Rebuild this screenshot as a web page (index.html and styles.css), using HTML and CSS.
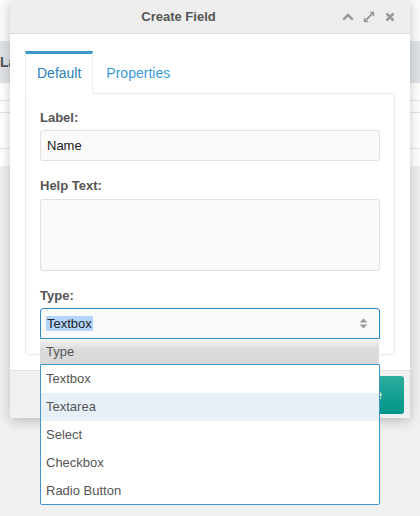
FILE: index.html
```html
<!DOCTYPE html>
<html>
<head>
<meta charset="utf-8">
<link rel="stylesheet" href="styles.css">
</head>
<body>
<div class="page">
  <div class="page-top"></div>
  <div class="table-head"><span class="th">Label</span></div>
  <div class="row r1"></div>
  <div class="row r2"></div>
  <div class="row r3"></div>
</div>

<div class="modal">
  <div class="modal-header">
    <div class="modal-title">Create Field</div>
    <div class="modal-icons">
      <svg class="ic" width="12" height="8" viewBox="0 0 12 8"><path d="M1.3 6.7 L6 2 L10.7 6.7" stroke="#9a9a9a" stroke-width="2.6" fill="none"/></svg>
      <svg class="ic" width="12" height="12" viewBox="0 0 12 12"><path d="M3 9 L9 3" stroke="#9a9a9a" stroke-width="1.8"/><path d="M6.2 0.8 L11.2 0.8 L11.2 5.8 Z" fill="#9a9a9a"/><path d="M0.8 6.2 L0.8 11.2 L5.8 11.2 Z" fill="#9a9a9a"/></svg>
      <svg class="ic" width="10" height="10" viewBox="0 0 10 10"><path d="M1.5 1.5 L8.5 8.5 M8.5 1.5 L1.5 8.5" stroke="#9a9a9a" stroke-width="2.6"/></svg>
    </div>
  </div>
  <div class="modal-body">
    <div class="tabs">
      <div class="tab active">Default</div>
      <div class="tab">Properties</div>
    </div>
    <div class="panel">
      <div class="field">
        <div class="label">Label:</div>
        <div class="input">Name</div>
      </div>
      <div class="field">
        <div class="label">Help Text:</div>
        <div class="input textarea"></div>
      </div>
      <div class="field last">
        <div class="label">Type:</div>
        <div class="select-wrap">
          <div class="select"><span class="sel-text">Textbox</span>
            <svg class="updown" width="9" height="11" viewBox="0 0 9 11"><path d="M0.5 4.5 L4.5 0.5 L8.5 4.5 Z M0.5 6.5 L4.5 10.5 L8.5 6.5 Z" fill="#999"/></svg>
          </div>
          <div class="dropdown">
            <div class="dd-head">Type</div>
            <div class="dd-list">
              <div class="dd-item">Textbox</div>
              <div class="dd-item hover">Textarea</div>
              <div class="dd-item">Select</div>
              <div class="dd-item">Checkbox</div>
              <div class="dd-item">Radio Button</div>
            </div>
          </div>
        </div>
      </div>
    </div>
  </div>
  <div class="modal-footer">
    <div class="btn">Save</div>
  </div>
</div>
</body>
</html>
```

FILE: styles.css
```css
html, body {
  margin: 0;
  padding: 0;
}
body {
  width: 420px;
  height: 516px;
  background: #f0f0f0;
  font-family: "Liberation Sans", Arial, sans-serif;
  font-size: 13px;
  color: #555;
  position: relative;
  overflow: hidden;
}
.page {
  background: #fff;
}
.page-top {
  height: 41px;
  background: #fbfbfb;
}
.table-head {
  height: 42px;
  background: #dfe3e7;
  display: flex;
  align-items: center;
}
.th {
  font-weight: bold;
  color: #555;
  font-size: 14px;
  padding-left: 0;
}
.row {
  border-bottom: 1px solid #e4e4e4;
}
.r1 { height: 17px; }
.r2 { height: 11px; }
.r3 { height: 35px; }
.page::after {
  content: "";
  display: block;
  height: 17px;
}

.modal {
  position: absolute;
  left: 10px;
  top: 0;
  width: 400px;
  background: #fff;
  box-shadow: 0 3px 12px rgba(0,0,0,0.22);
  border-radius: 0 0 3px 3px;
}
.modal-header {
  height: 34px;
  background: #eeeeee;
  border-bottom: 1px solid #dcdcdc;
  box-sizing: border-box;
  display: flex;
  align-items: center;
}
.modal-title {
  flex: 1;
  text-align: center;
  font-weight: bold;
  font-size: 13px;
  color: #555;
  padding-left: 5px;
}
.modal-icons {
  display: flex;
  align-items: center;
  padding-right: 15px;
  gap: 9px;
}
.ic { display: block; }
.ic:last-child { margin-left: 1px; }

.modal-body {
  padding: 17px 15px 15px;
}
.tabs {
  display: flex;
  height: 42px;
}
.tab {
  box-sizing: border-box;
  height: 42px;
  padding: 3px 13px 0 13px;
  line-height: 39px;
  font-size: 14px;
  color: #3b9ad8;
}
.tab.active {
  padding: 0 11px 0 11px;
  border-top: 3px solid #3797d3;
  border-left: 1px solid #eee;
  border-right: 1px solid #eee;
  background: #fff;
  color: #2a7fb8;
  position: relative;
  z-index: 1;
  margin-bottom: -1px;
  height: 43px;
}
.panel {
  border: 1px solid #ececec;
  border-radius: 0 4px 4px 4px;
  box-shadow: 0 1px 2px rgba(0,0,0,0.04);
  padding: 16px 14px 15px;
}
.field {
  margin-bottom: 17px;
}
.field.last { margin-bottom: 0; }
.label {
  font-weight: bold;
  font-size: 13px;
  line-height: 16px;
  color: #555;
  margin-bottom: 4px;
}
.input {
  box-sizing: border-box;
  height: 31px;
  background: #fafafa;
  border: 1px solid #e1e1e1;
  border-radius: 3px;
  padding: 0 6px;
  line-height: 29px;
  font-size: 13px;
  color: #222;
}
.input.textarea {
  height: 72px;
  margin-top: 5px;
}
.select-wrap {
  position: relative;
}
.select {
  box-sizing: border-box;
  height: 31px;
  background: #fafafa;
  border: 1px solid #2f8bc6;
  border-radius: 3px 3px 0 0;
  padding: 0 11px 0 5px;
  display: flex;
  align-items: center;
  justify-content: space-between;
  font-size: 13px;
  color: #222;
}
.sel-text {
  background: #b4d5fe;
  padding: 0 1px;
  line-height: 15px;
}
.dropdown {
  position: absolute;
  left: 0;
  right: 0;
  top: 31px;
  z-index: 5;
}
.dd-head {
  height: 25px;
  line-height: 25px;
  padding-left: 6px;
  background: linear-gradient(#f6f6f6, #dcdcdc 40%, #d9d9d9);
  color: #555;
  font-size: 13px;
  margin-right: 1px;
}
.dd-list {
  background: #fff;
  border: 1px solid #3d97d0;
  border-radius: 0 0 2px 2px;
}
.dd-item {
  height: 28px;
  line-height: 28px;
  padding-left: 5px;
  color: #555;
  font-size: 13px;
}
.dd-item:last-child { height: 27px; }
.dd-item.hover {
  background: #e8f0f8;
}
.modal-footer {
  height: 48px;
  box-sizing: border-box;
  background: #f0f0f0;
  border-top: 1px solid #e2e2e2;
  padding: 5px 6px 4px;
  display: flex;
  justify-content: flex-end;
  border-radius: 0 0 3px 3px;
}
.btn {
  height: 38px;
  line-height: 38px;
  padding: 0 22px;
  background: linear-gradient(#2dac9c, #00968a);
  color: #fff;
  border-radius: 3px;
  font-size: 13px;
}
```
